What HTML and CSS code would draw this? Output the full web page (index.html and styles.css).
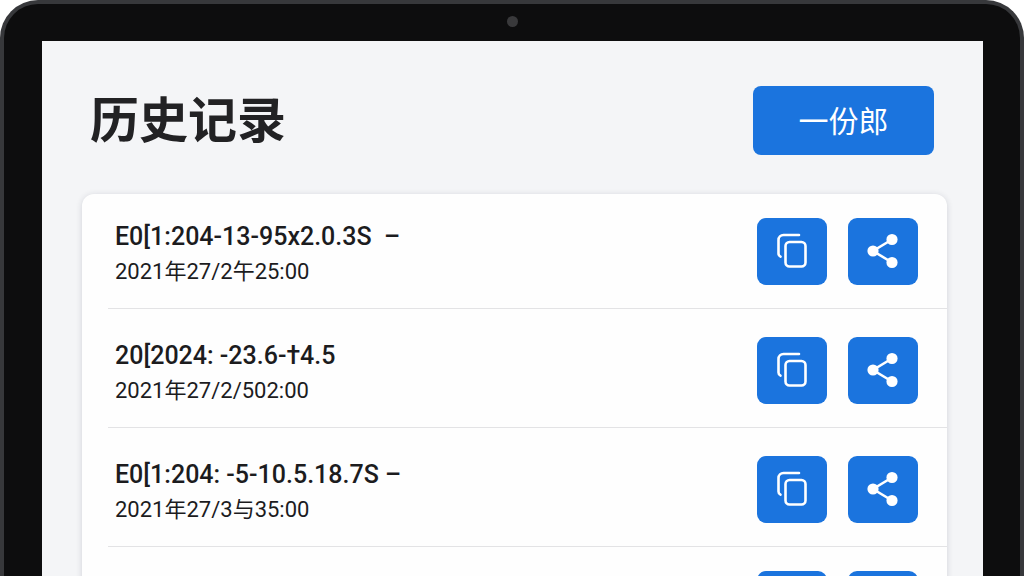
FILE: index.html
```html
<!DOCTYPE html>
<html lang="zh-CN">
<head>
    <meta charset="UTF-8">
    <meta name="viewport" content="width=device-width, initial-scale=1.0">
    <title>历史记录</title>
    <link rel="stylesheet" href="styles.css">
</head>
<body>

    <!-- Shared icons -->
    <svg class="sprite" aria-hidden="true">
        <symbol id="icon-copy" viewBox="0 0 36 40">
            <path d="M25 4H9.5a5 5 0 0 0-5 5v13.500a3.500 3.500 0 0 0 2 3.200" />
            <rect x="11.5" y="11" width="20" height="24.500" rx="4" />
        </symbol>
        <symbol id="icon-share" viewBox="0 0 36 40">
            <path d="M27 8.5L8 20l19 11.5" />
            <circle cx="27" cy="8.5" r="4.3" />
            <circle cx="8" cy="20" r="4.3" />
            <circle cx="27" cy="31.5" r="4.3" />
        </symbol>
    </svg>

    <div class="tablet">
        <span class="camera"></span>

        <main class="screen">
            <header class="page-header">
                <h1>历史记录</h1>
                <button type="button" class="main-button">一份郎</button>
            </header>

            <!-- History list -->
            <ul class="history">
                <li class="record">
                    <div class="record-text">
                        <h2>E0[1:204-13-95x2.0.3S &nbsp;–</h2>
                        <p>2021年27/2午25:00</p>
                    </div>
                    <button type="button" class="icon-button" aria-label="复制"><svg><use href="#icon-copy" /></svg></button>
                    <button type="button" class="icon-button" aria-label="分享"><svg><use href="#icon-share" /></svg></button>
                </li>
                <li class="record">
                    <div class="record-text">
                        <h2>20[2024: -23.6-†4.5</h2>
                        <p>2021年27/2/502:00</p>
                    </div>
                    <button type="button" class="icon-button" aria-label="复制"><svg><use href="#icon-copy" /></svg></button>
                    <button type="button" class="icon-button" aria-label="分享"><svg><use href="#icon-share" /></svg></button>
                </li>
                <li class="record">
                    <div class="record-text">
                        <h2>E0[1:204: -5-10.5.18.7S –</h2>
                        <p>2021年27/3与35:00</p>
                    </div>
                    <button type="button" class="icon-button" aria-label="复制"><svg><use href="#icon-copy" /></svg></button>
                    <button type="button" class="icon-button" aria-label="分享"><svg><use href="#icon-share" /></svg></button>
                </li>
                <li class="record">
                    <div class="record-text"></div>
                    <button type="button" class="icon-button" aria-label="复制"><svg><use href="#icon-copy" /></svg></button>
                    <button type="button" class="icon-button" aria-label="分享"><svg><use href="#icon-share" /></svg></button>
                </li>
            </ul>
        </main>
    </div>

</body>
</html>
```
FILE: styles.css
```css
* {
    box-sizing: border-box;
}

body {
    margin: 0;
    background-color: #fff;
    color: #1c1c1e;
    font-family: Roboto, "Noto Sans CJK SC", sans-serif;
}

h1, h2, p, ul {
    margin: 0;
    padding: 0;
}

.sprite {
    display: none;
}

/* Tablet frame, runs off the bottom of the window */
.tablet {
    position: relative;
    height: 100vh;
    padding: 37px 37px 0 38px;
    overflow: hidden;
    background-color: #0d0d0e;
    border: 4px solid #37383b;
    border-bottom: 0;
    border-radius: 38px 38px 0 0;
}

.camera {
    position: absolute;
    top: 12px;
    left: 50%;
    width: 11px;
    height: 11px;
    margin-left: -5px;
    border-radius: 50%;
    background-color: #39393b;
}

.screen {
    min-height: 100%;
    padding: 45px 36px 0 40px;
    background-color: #f4f5f7;
}

.page-header {
    display: flex;
    justify-content: space-between;
    align-items: center;
    padding: 0 13px 0 8px;
    margin-bottom: 39px;
}

h1 {
    padding-top: 2px;
    font-size: 49px;
    font-weight: 700;
    line-height: 66px;
    color: #222224;
}

button {
    border: 0;
    background-color: #1b74de;
    color: #fff;
    cursor: pointer;
}

.main-button {
    width: 181px;
    height: 69px;
    padding: 0 0 4px;
    border-radius: 8px;
    font-family: inherit;
    font-size: 30px;
}

/* History card */
.history {
    list-style: none;
    padding-left: 26px;
    background-color: #fefefe;
    border-radius: 12px;
    box-shadow: 0 1px 6px rgba(30, 40, 60, 0.16);
}

.record {
    display: flex;
    align-items: center;
    gap: 21px;
    padding: 24px 29px 20px 7px;
    border-bottom: 1px solid #e3e3e5;
}

    .record:first-child {
        padding-top: 20px;
    }

.record-text {
    flex: 1;
    padding-top: 4px;
    white-space: nowrap;
}

    .record-text h2 {
        font-size: 25px;
        font-weight: 500;
        line-height: 38px;
    }

    .record-text p {
        font-size: 22px;
        line-height: 32px;
    }

.icon-button {
    display: flex;
    justify-content: center;
    align-items: center;
    width: 70px;
    height: 67px;
    padding: 0;
    border-radius: 9px;
}

    .icon-button svg {
        width: 36px;
        height: 40px;
        fill: none;
        stroke: #fff;
        stroke-width: 2.6;
        stroke-linecap: round;
    }

#icon-share circle {
    fill: #fff;
}
```
